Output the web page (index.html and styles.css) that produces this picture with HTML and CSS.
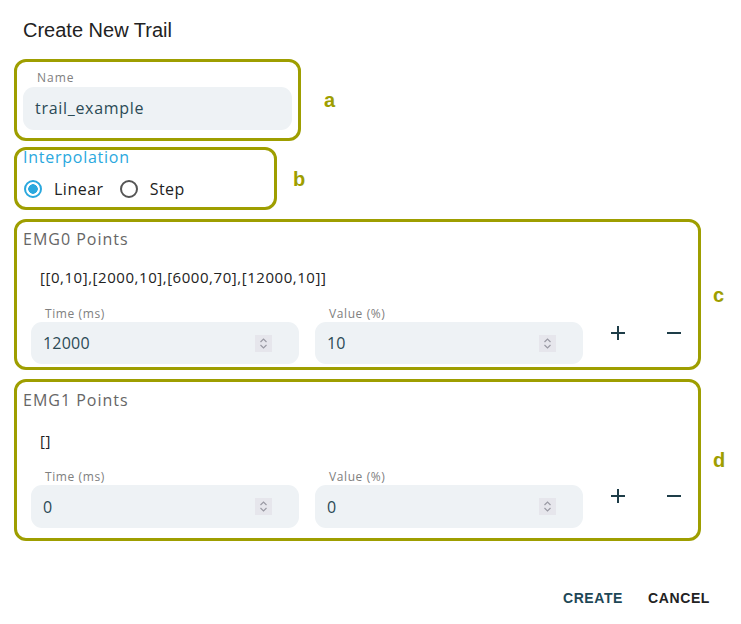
FILE: index.html
```html
<!DOCTYPE html>
<html lang="en">
<head>
<meta charset="utf-8">
<title>Create New Trail</title>
<link rel="stylesheet" href="styles.css">
</head>
<body>
<div class="dialog">
  <h1 class="title">Create New Trail</h1>

  <div class="row row-a">
    <section class="box box-name">
      <div class="field-label name-label">Name</div>
      <div class="input input-name">trail_example</div>
    </section>
    <span class="tag tag-a">a</span>
  </div>

  <div class="row row-b">
    <section class="box box-interp">
      <div class="interp-label">Interpolation</div>
      <div class="radios">
        <span class="radio radio-on"></span><span class="radio-text">Linear</span>
        <span class="radio radio-off"></span><span class="radio-text">Step</span>
      </div>
    </section>
    <span class="tag tag-b">b</span>
  </div>

  <div class="row row-c">
    <section class="box box-points box-c">
      <div class="points-label">EMG0 Points</div>
      <div class="points-array">[[0,10],[2000,10],[6000,70],[12000,10]]</div>
      <div class="fields">
        <div class="field">
          <div class="field-label small-label">Time (ms)</div>
          <div class="input input-num"><span>12000</span><span class="spin"><svg width="9" height="13" viewBox="0 0 9 13"><path d="M1.5 5 L4.5 2 L7.5 5 M1.5 8 L4.5 11 L7.5 8" fill="none" stroke="#9a9aa4" stroke-width="1.2"/></svg></span></div>
        </div>
        <div class="field">
          <div class="field-label small-label">Value (%)</div>
          <div class="input input-num"><span>10</span><span class="spin"><svg width="9" height="13" viewBox="0 0 9 13"><path d="M1.5 5 L4.5 2 L7.5 5 M1.5 8 L4.5 11 L7.5 8" fill="none" stroke="#9a9aa4" stroke-width="1.2"/></svg></span></div>
        </div>
        <span class="icon-btn plus"><svg width="16" height="16" viewBox="0 0 16 16"><path d="M8 1 V15 M1 8 H15" stroke="#1e3d48" stroke-width="2"/></svg></span>
        <span class="icon-btn minus"><svg width="16" height="16" viewBox="0 0 16 16"><path d="M1 8 H15" stroke="#1e3d48" stroke-width="2"/></svg></span>
      </div>
    </section>
    <span class="tag tag-c">c</span>
  </div>

  <div class="row row-d">
    <section class="box box-points box-d">
      <div class="points-label">EMG1 Points</div>
      <div class="points-array">[]</div>
      <div class="fields">
        <div class="field">
          <div class="field-label small-label">Time (ms)</div>
          <div class="input input-num"><span>0</span><span class="spin"><svg width="9" height="13" viewBox="0 0 9 13"><path d="M1.5 5 L4.5 2 L7.5 5 M1.5 8 L4.5 11 L7.5 8" fill="none" stroke="#9a9aa4" stroke-width="1.2"/></svg></span></div>
        </div>
        <div class="field">
          <div class="field-label small-label">Value (%)</div>
          <div class="input input-num"><span>0</span><span class="spin"><svg width="9" height="13" viewBox="0 0 9 13"><path d="M1.5 5 L4.5 2 L7.5 5 M1.5 8 L4.5 11 L7.5 8" fill="none" stroke="#9a9aa4" stroke-width="1.2"/></svg></span></div>
        </div>
        <span class="icon-btn plus"><svg width="16" height="16" viewBox="0 0 16 16"><path d="M8 1 V15 M1 8 H15" stroke="#1e3d48" stroke-width="2"/></svg></span>
        <span class="icon-btn minus"><svg width="16" height="16" viewBox="0 0 16 16"><path d="M1 8 H15" stroke="#1e3d48" stroke-width="2"/></svg></span>
      </div>
    </section>
    <span class="tag tag-d">d</span>
  </div>

  <div class="actions">
    <span class="action action-create">CREATE</span>
    <span class="action action-cancel">CANCEL</span>
  </div>
</div>
</body>
</html>
```

FILE: styles.css
```css
html, body {
  margin: 0;
  padding: 0;
  background: #ffffff;
}
body {
  font-family: "Open Sans", "DejaVu Sans", sans-serif;
  color: #222;
}
.dialog {
  width: 741px;
  height: 624px;
  box-sizing: border-box;
  padding: 18px 0 0 14px;
}
.title {
  margin: 0 0 17px 9px;
  font-family: "Liberation Sans", Arial, sans-serif;
  font-weight: 400;
  font-size: 20px;
  line-height: 24px;
  color: #222;
}
.row {
  display: flex;
  align-items: center;
}
.box {
  box-sizing: border-box;
  border: 3px solid #9e9e00;
  border-radius: 12px;
}
.tag {
  font-family: "Liberation Sans", Arial, sans-serif;
  font-weight: 700;
  font-size: 20px;
  line-height: 20px;
  color: #9e9e00;
}
/* a */
.box-name {
  width: 287px;
  height: 82px;
  padding: 9px 6px 8px 6px;
}
.field-label {
  color: #808080;
}
.name-label {
  font-size: 12px;
  line-height: 14px;
  letter-spacing: 1px;
  margin: 0 0 2px 14px;
}
.input {
  box-sizing: border-box;
  background: #eef2f5;
  border-radius: 11px;
  color: #2b4a55;
  font-size: 16px;
}
.input-name {
  height: 43px;
  line-height: 43px;
  padding-left: 12px;
  letter-spacing: 0.7px;
}
.tag-a { margin-left: 23px; }

/* b */
.row-b { margin-top: 6px; }
.box-interp {
  width: 263px;
  height: 63px;
  padding: 0 6px 6px 6px;
}
.interp-label {
  font-size: 16px;
  line-height: 14px;
  letter-spacing: 0.75px;
  color: #2aa8de;
}
.radios {
  display: flex;
  align-items: center;
  height: 24px;
  margin-top: 13px;
  font-size: 16px;
  letter-spacing: 0.5px;
  color: #222;
}
.radio {
  box-sizing: border-box;
  width: 18px;
  height: 18px;
  border-radius: 50%;
  flex: none;
}
.radio-on {
  margin-left: 1px;
  border: 2px solid #2aa8de;
  background: radial-gradient(circle, #2aa8de 0 4.5px, #ffffff 5px);
}
.radio-off {
  margin-left: 16px;
  border: 2px solid #555;
}
.radio-text { margin-left: 12px; }
.tag-b { margin-left: 16px; }

/* c, d */
.row-c, .row-d { margin-top: 9px; }
.box-points {
  width: 687px;
  padding: 8px 14px 3px 6px;
}
.box-c { height: 151px; }
.box-d { height: 162px; padding-top: 9px; }
.points-label {
  font-size: 16px;
  line-height: 18px;
  letter-spacing: 1px;
  color: #666;
}
.points-array {
  margin: 20px 0 0 17px;
  font-size: 15px;
  line-height: 18px;
  letter-spacing: 0.55px;
  color: #222;
}
.box-d .points-array { margin-top: 22px; }
.fields {
  display: flex;
  align-items: flex-start;
  margin: 21px 0 0 8px;
}
.field {
  width: 268px;
  margin-right: 16px;
}
.small-label {
  font-size: 12px;
  line-height: 13px;
  letter-spacing: 0.6px;
  margin: 0 0 2px 14px;
}
.input-num {
  height: 42px;
  display: flex;
  align-items: center;
  justify-content: space-between;
  padding: 0 27px 0 12px;
  letter-spacing: 0.2px;
}
.box-d .input-num { height: 43px; }
.spin {
  width: 17px;
  height: 17px;
  background: #e6e6ec;
  display: flex;
  align-items: center;
  justify-content: center;
}
.icon-btn {
  width: 16px;
  height: 16px;
  margin-top: 18px;
  display: flex;
}
.plus { margin-left: 11px; }
.minus { margin-left: 40px; }
.tag-c { margin-left: 12px; }
.tag-d { margin-left: 12px; }

/* actions */
.actions {
  display: flex;
  justify-content: flex-end;
  gap: 25px;
  margin: 49px 31px 0 0;
  font-family: "Liberation Sans", Arial, sans-serif;
  font-weight: 700;
  font-size: 14px;
  line-height: 16px;
  letter-spacing: 0.6px;
}
.action-create { color: #1d4756; }
.action-cancel { color: #222; }
```
